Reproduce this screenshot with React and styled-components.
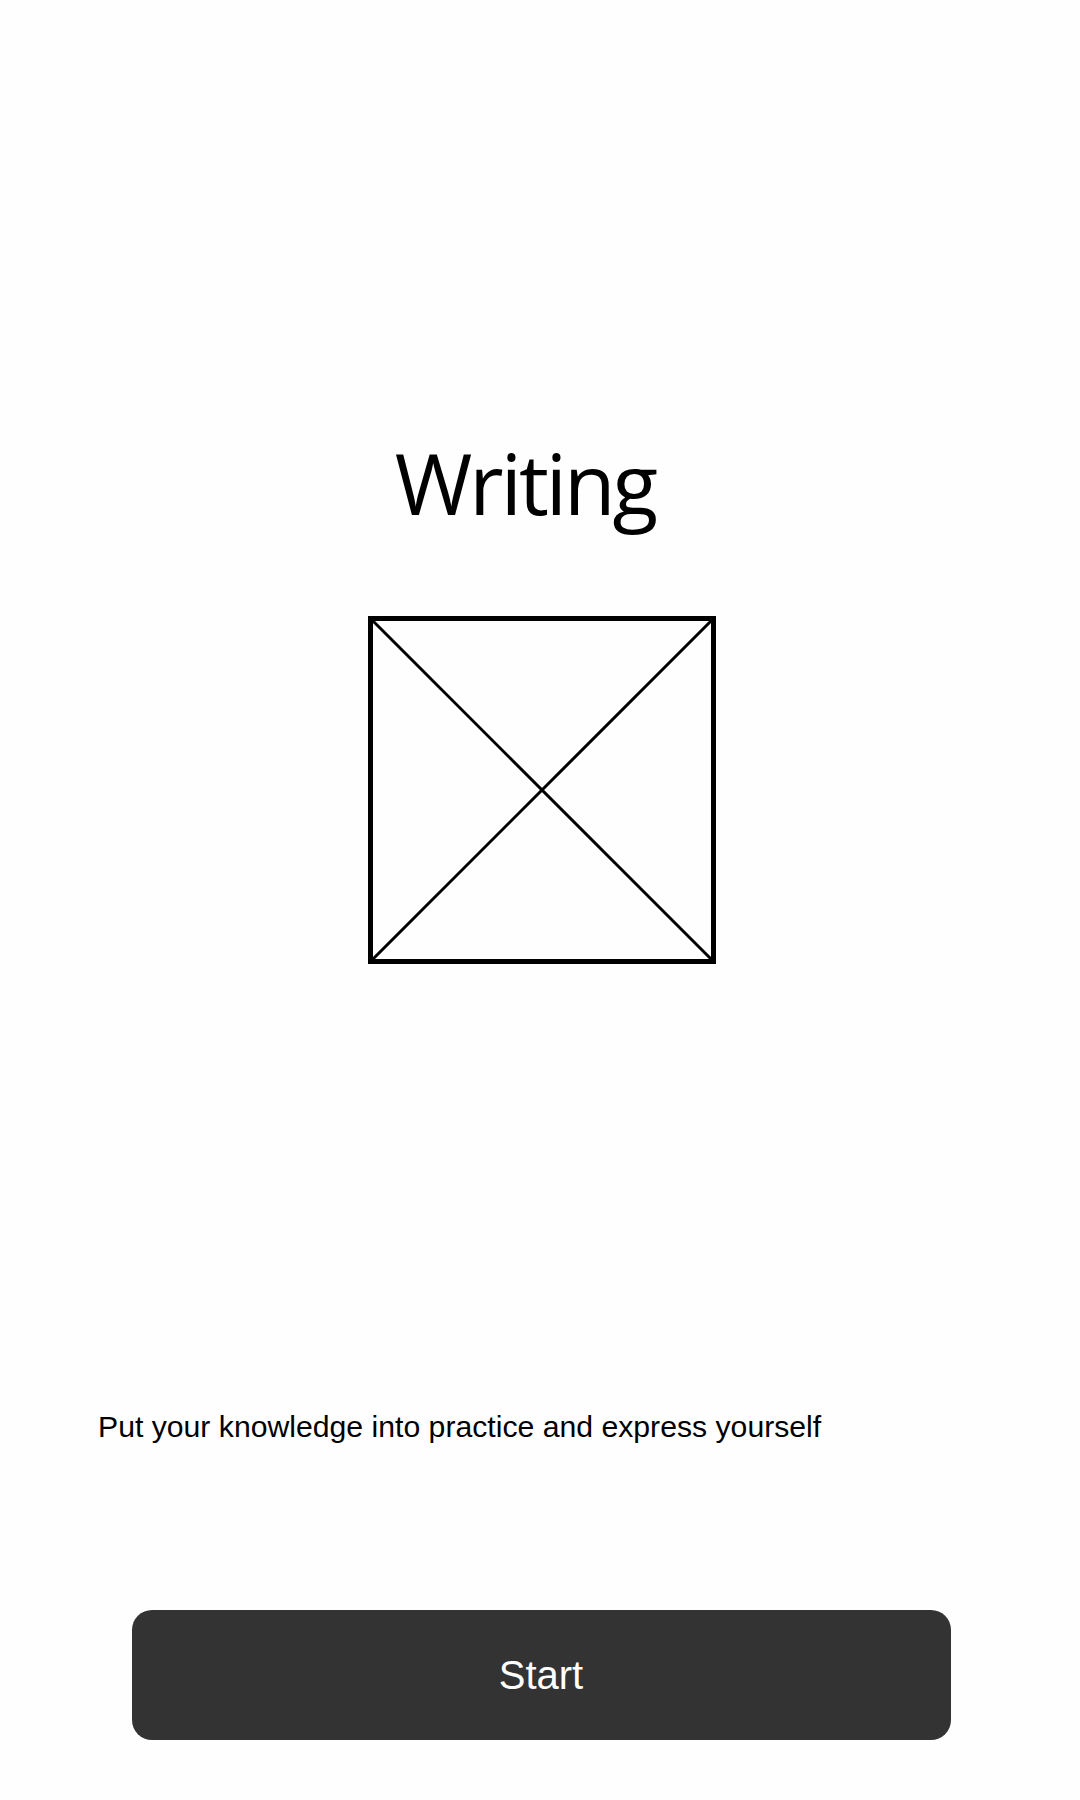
import React from "react";
import styled, { createGlobalStyle } from "styled-components";

const GlobalStyle = createGlobalStyle`
  html, body {
    margin: 0;
    padding: 0;
    background: #fefefe;
  }
`;

const Page = styled.div`
  width: 1080px;
  min-height: 1800px;
  display: flex;
  flex-direction: column;
  align-items: center;
  font-family: "Liberation Sans", Arial, sans-serif;
  color: #000;
`;

const Title = styled.h1`
  margin: 441px 30px 0 0;
  font-family: "Open Sans", "Noto Sans", sans-serif;
  font-weight: 400;
  font-size: 84px;
  line-height: 1;
  letter-spacing: -3px;
`;

const Placeholder = styled.svg`
  display: block;
  margin-top: 91px;
  margin-left: 3px;
`;

const Description = styled.p`
  align-self: stretch;
  margin: 448px 0 0;
  padding-left: 98px;
  font-size: 30.2px;
  line-height: 1;
`;

const StartButton = styled.button`
  margin-top: 168px;
  width: 819px;
  height: 130px;
  margin-left: 2px;
  border: none;
  border-radius: 20px;
  background: #333333;
  color: #fff;
  font-family: "Liberation Sans", Arial, sans-serif;
  font-size: 40px;
  cursor: pointer;
`;

const App = () => {
  return (
    <>
      <GlobalStyle />
      <Page>
        <Title>Writing</Title>
        <Placeholder width="348" height="348" viewBox="0 0 348 348">
          <rect x="2.5" y="2.5" width="343" height="343" fill="none" stroke="#000" strokeWidth="5" />
          <line x1="2.5" y1="2.5" x2="345.5" y2="345.5" stroke="#000" strokeWidth="3" />
          <line x1="345.5" y1="2.5" x2="2.5" y2="345.5" stroke="#000" strokeWidth="3" />
        </Placeholder>
        <Description>Put your knowledge into practice and express yourself</Description>
        <StartButton>Start</StartButton>
      </Page>
    </>
  );
};

export default App;
